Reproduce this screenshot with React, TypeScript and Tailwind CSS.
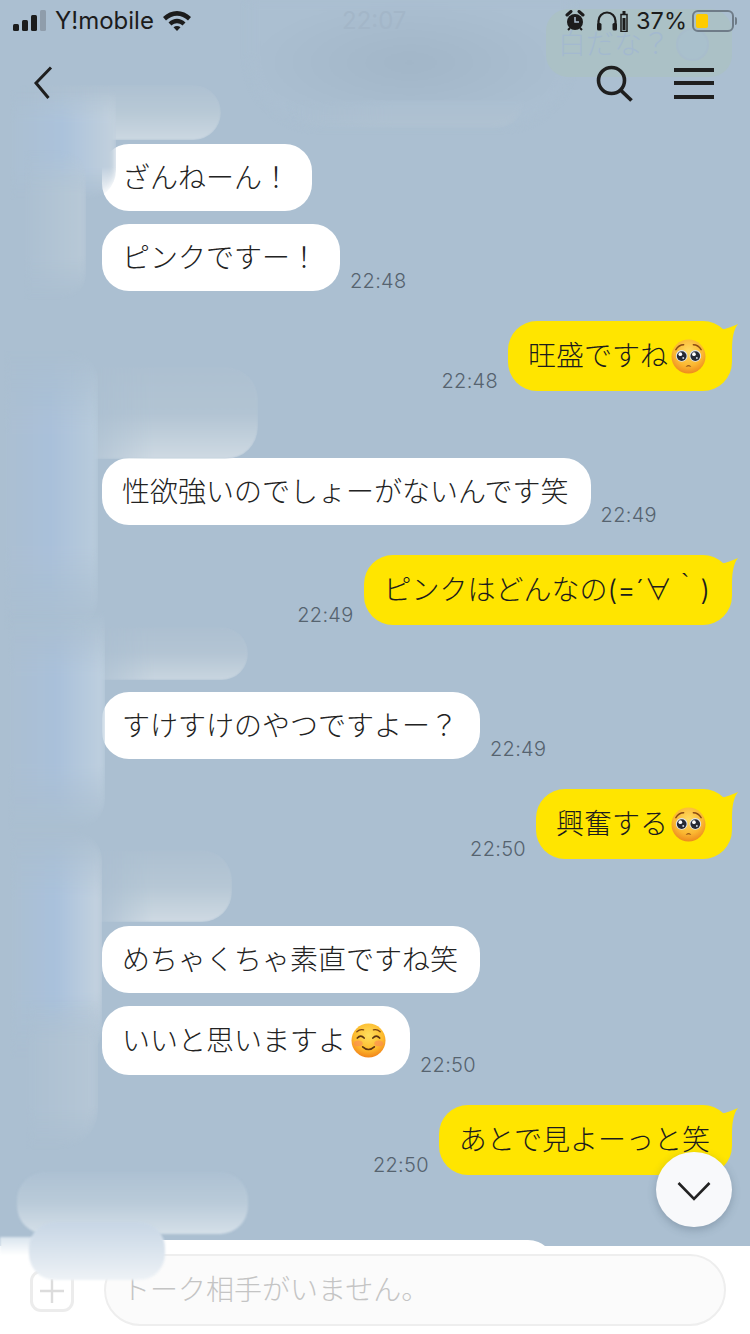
import React from "react";

const FONT = "font-['Inter','Noto_Sans_CJK_JP',sans-serif]";

function Pleading() {
  return (
    <svg viewBox="0 0 36 36" className="w-[35px] h-[35px] shrink-0 ml-[3px]">
      <defs>
        <radialGradient id="pf" cx="50%" cy="35%" r="65%">
          <stop offset="0%" stopColor="#ffdc63" />
          <stop offset="65%" stopColor="#fbb731" />
          <stop offset="100%" stopColor="#ee8a1e" />
        </radialGradient>
      </defs>
      <circle cx="18" cy="18" r="17.5" fill="url(#pf)" />
      <path d="M5 11 Q8 6 13 6" stroke="#8a4b12" strokeWidth="1.5" fill="none" strokeLinecap="round" />
      <path d="M31 11 Q28 6 23 6" stroke="#8a4b12" strokeWidth="1.5" fill="none" strokeLinecap="round" />
      <circle cx="11" cy="17.4" r="6" fill="#dfe4ee" />
      <circle cx="25" cy="17.4" r="6" fill="#dfe4ee" />
      <circle cx="11" cy="17.6" r="5" fill="#262a34" />
      <circle cx="25" cy="17.6" r="5" fill="#262a34" />
      <circle cx="9.6" cy="15.6" r="1.9" fill="#fff" />
      <circle cx="23.6" cy="15.6" r="1.9" fill="#fff" />
      <circle cx="12.6" cy="19.6" r="1" fill="#cfd6e6" />
      <circle cx="26.6" cy="19.6" r="1" fill="#cfd6e6" />
      <path d="M15 28.5 Q18 25.5 21 28.5 Q18 27.6 15 28.5Z" fill="#7a3c10" />
    </svg>
  );
}

function Smiling() {
  return (
    <svg viewBox="0 0 36 36" className="w-[35px] h-[35px] shrink-0 ml-[5px] mr-[2px]">
      <defs>
        <radialGradient id="sf" cx="50%" cy="35%" r="65%">
          <stop offset="0%" stopColor="#ffdf5e" />
          <stop offset="65%" stopColor="#fdbb2d" />
          <stop offset="100%" stopColor="#f2851b" />
        </radialGradient>
      </defs>
      <circle cx="18" cy="18" r="17.5" fill="url(#sf)" />
      <ellipse cx="7.5" cy="21" rx="4.5" ry="3" fill="#f9835a" opacity="0.55" />
      <ellipse cx="28.5" cy="21" rx="4.5" ry="3" fill="#f9835a" opacity="0.55" />
      <path d="M6 9 Q9 6 13 7" stroke="#7a4212" strokeWidth="1.3" fill="none" strokeLinecap="round" />
      <path d="M30 9 Q27 6 23 7" stroke="#7a4212" strokeWidth="1.3" fill="none" strokeLinecap="round" />
      <path d="M6.5 15.5 Q10 11.5 13.5 15.5" stroke="#5b3210" strokeWidth="1.7" fill="none" strokeLinecap="round" />
      <path d="M22.5 15.5 Q26 11.5 29.5 15.5" stroke="#5b3210" strokeWidth="1.7" fill="none" strokeLinecap="round" />
      <path d="M12 24.5 Q18 30 24 24.5" stroke="#5b3210" strokeWidth="1.7" fill="none" strokeLinecap="round" />
    </svg>
  );
}

function Tail() {
  return (
    <svg viewBox="0 0 24 26" className="absolute -right-[6px] top-[2px] w-[24px] h-[26px]">
      <path d="M0 6 C8 8 14 5 24 1 C20 6 18 14 18 26 L0 26Z" fill="#ffe500" />
    </svg>
  );
}

function Time({ t }: { t: string }) {
  return <span className="text-[20px] leading-[20px] tracking-[0.3px] font-light text-[#56636f] shrink-0">{t}</span>;
}

function Them({ text, time, mt, h = "h-[67px]", emoji }: { text: string; time?: string; mt: string; h?: string; emoji?: boolean }) {
  return (
    <div className={`flex items-end gap-[10px] pl-[102px] shrink-0 ${mt}`}>
      <div className={`flex items-center bg-white rounded-[27px] pl-[20px] pr-[22px] text-[28px] font-light text-[#222] whitespace-nowrap ${h}`}>
        {text}
        {emoji && <Smiling />}
      </div>
      {time && <Time t={time} />}
    </div>
  );
}

function Me({ children, time, mt, emoji }: { children: React.ReactNode; time: string; mt: string; emoji?: boolean }) {
  return (
    <div className={`flex items-end justify-end gap-[10px] pr-[18px] shrink-0 ${mt}`}>
      <Time t={time} />
      <div className={`relative flex items-center bg-[#ffe500] rounded-[29px] pl-[20px] h-[70px] text-[28px] font-light text-[#1c1c1c] whitespace-nowrap ${emoji ? "pr-[26px]" : "pr-[22px]"}`}>
        <Tail />
        <span className="relative">{children}</span>
        {emoji && <span className="relative"><Pleading /></span>}
      </div>
    </div>
  );
}

const FADE_Y = "[mask-image:linear-gradient(to_bottom,transparent,black_30%,black_70%,transparent)]";
const FADE_X = "[mask-image:linear-gradient(to_right,transparent,black_45%)]";

const smears = [
  `left-[250px] top-0 w-[320px] h-[125px] rounded-b-[70px] bg-[radial-gradient(ellipse_at_center,#a2b6c8,#abbfd1_72%)] blur-[4px]`,
  `left-[285px] top-[100px] w-[240px] h-[28px] rounded-b-[40px] bg-linear-to-b from-[#abbfd1] to-[#b0c2d1] blur-[3px] ${FADE_X}`,
  `left-[20px] top-[85px] w-[201px] h-[55px] rounded-r-[28px] bg-linear-to-b from-[#aec1d2] via-[#b8c9d6] to-[#ccd8e2] blur-[1px] ${FADE_X}`,
  `left-[10px] top-[90px] w-[106px] h-[110px] rounded-br-[30px] bg-linear-to-r from-[#abbfd1] via-[#abc2db] to-[#c3d1dd] blur-[3px] ${FADE_Y}`,
  `left-[24px] top-[150px] w-[62px] h-[150px] rounded-r-[26px] bg-linear-to-r from-[#abbfd1] to-[#b8c9d7] blur-[3px] ${FADE_Y}`,
  `left-[70px] top-[367px] w-[188px] h-[92px] rounded-r-[32px] bg-linear-to-b from-[#adc0d1] via-[#b2c4d3] to-[#cfdae3] blur-[1px] ${FADE_X}`,
  `left-[4px] top-[350px] w-[94px] h-[280px] rounded-r-[30px] bg-linear-to-r from-[#abbfd1] via-[#a9c0da] to-[#b9ccdc] blur-[3px] ${FADE_Y}`,
  `left-[80px] top-[627px] w-[168px] h-[53px] rounded-r-[26px] bg-linear-to-b from-[#adc0d1] via-[#b4c5d4] to-[#c9d6e0] blur-[1px] ${FADE_X}`,
  `left-[8px] top-[610px] w-[97px] h-[220px] rounded-br-[30px] bg-linear-to-r from-[#abbfd1] via-[#a9c0da] to-[#bfd0df] blur-[3px] ${FADE_Y}`,
  `left-[90px] top-[850px] w-[142px] h-[72px] rounded-r-[30px] bg-linear-to-b from-[#adc0d1] via-[#b6c7d5] to-[#cfdae3] blur-[1px] ${FADE_X}`,
  `left-[10px] top-[830px] w-[92px] h-[230px] rounded-r-[30px] bg-linear-to-r from-[#abbfd1] via-[#a9c1dc] to-[#c5d3df] blur-[3px] ${FADE_Y}`,
  `left-[26px] top-[1000px] w-[72px] h-[150px] rounded-br-[40px] bg-linear-to-r from-[#abbfd1] to-[#b6c7d6] blur-[4px] ${FADE_Y}`,
  "left-[17px] top-[1172px] w-[231px] h-[62px] rounded-[28px] bg-linear-to-b from-[#adc1d3] via-[#bacbd9] to-[#d5e0e9] blur-[1px]",
  "left-0 top-[1237px] w-[60px] h-[18px] bg-linear-to-b from-[#d9e4ee] to-[#fff] blur-[1px]",
  "left-[29px] top-[1222px] w-[136px] h-[58px] rounded-[26px] bg-linear-to-b from-[#c7d6e5] to-[#eef2f6] blur-[1px]",
];

export default function App() {
  return (
    <div className={`relative flex flex-col w-[750px] h-[1334px] overflow-hidden bg-[#abbfd1] ${FONT}`}>
      <header className="relative z-20 shrink-0 h-[144px]">
        {/* faded pinned bubble behind the status bar */}
        <div className="absolute left-[546px] top-[9px] w-[186px] h-[68px] rounded-[22px] bg-[#abc1c6] flex items-center pl-[12px] pt-[2px] text-[28px] leading-[24px] font-light text-[#a3b9cf]">
          <span>白だな？</span>
          <span className="ml-[6px] w-[33px] h-[33px] rounded-full bg-[#a9c0cc] border-[2px] border-[#a8bdcc]" />
        </div>
        <div className="absolute left-[342px] top-[7px] text-[24px] leading-[28px] text-[#a3b6c8]">22:07</div>

        <div className="relative flex items-center h-[42px] pl-[13px] pr-[13px] text-[#1c1c1c]">
          <svg viewBox="0 0 34 22" className="w-[34px] h-[22px]">
            <rect x="0" y="14" width="6" height="7" rx="1.5" fill="#1c1c1c" />
            <rect x="9" y="10" width="6" height="11" rx="1.5" fill="#1c1c1c" />
            <rect x="18" y="5" width="6" height="16" rx="1.5" fill="#1c1c1c" />
            <rect x="27" y="0" width="6" height="21" rx="1.5" fill="#8f9dab" />
          </svg>
          <span className="ml-[8px] text-[24px] leading-none">Y!mobile</span>
          <svg viewBox="0 0 30 22" className="ml-[8px] w-[30px] h-[22px]">
            <path d="M1 7 C9 -1 21 -1 29 7 L26 10.5 C19.5 4 10.5 4 4 10.5Z" fill="#1c1c1c" />
            <path d="M6.5 12.5 C12 7.5 18 7.5 23.5 12.5 L20.5 15.5 C17 12.5 13 12.5 9.5 15.5Z" fill="#1c1c1c" />
            <path d="M11.5 17.2 C13.5 15.6 16.5 15.6 18.5 17.2 L15 21Z" fill="#1c1c1c" />
          </svg>
          <div className="flex-1" />
          <svg viewBox="0 0 20 22" className="w-[20px] h-[22px]">
            <circle cx="10" cy="12" r="8" fill="#1c1c1c" />
            <path d="M2 5 L6 1.5 M18 5 L14 1.5" stroke="#1c1c1c" strokeWidth="3" strokeLinecap="round" />
            <path d="M3 20 L5 18 M17 20 L15 18" stroke="#1c1c1c" strokeWidth="2" />
            <path d="M10 7 V12 H14" stroke="#abbfd1" strokeWidth="1.5" fill="none" />
          </svg>
          <svg viewBox="0 0 22 20" className="ml-[11px] w-[22px] h-[20px]">
            <path d="M2.5 14 V10 a8.5 8.5 0 0 1 17 0 V14" stroke="#1c1c1c" strokeWidth="2.2" fill="none" />
            <rect x="1" y="12" width="4.5" height="7.5" rx="1.5" fill="#1c1c1c" />
            <rect x="16.5" y="12" width="4.5" height="7.5" rx="1.5" fill="#1c1c1c" />
          </svg>
          <svg viewBox="0 0 8 21" className="ml-[2px] w-[8px] h-[21px]">
            <rect x="2.5" y="0" width="3" height="3" fill="#1c1c1c" />
            <rect x="1" y="3.5" width="6" height="17" fill="none" stroke="#1c1c1c" strokeWidth="1.5" />
            <rect x="2.5" y="7" width="3" height="12" fill="#1c1c1c" />
          </svg>
          <span className="ml-[8px] text-[23.5px] leading-none">37%</span>
          <div className="relative ml-[5px] w-[42px] h-[22px] rounded-[6px] border-[2px] border-[#6f7c88] p-[2px] mr-[3px]">
            <div className="w-[12px] h-full rounded-[2px] bg-[#ffcc00]" />
            <div className="absolute -right-[5px] top-[5px] w-[2px] h-[8px] rounded-r-[2px] bg-[#6f7c88]" />
          </div>
        </div>

        <nav className="relative flex items-center h-[82px]">
          <svg viewBox="0 0 20 34" className="ml-[33px] w-[20px] h-[34px]">
            <path d="M18 1.5 L3 17 L15.5 32" stroke="#1f1f1f" strokeWidth="3" fill="none" />
          </svg>
          <div className="flex-1" />
          <svg viewBox="0 0 38 37" className="w-[38px] h-[37px]">
            <circle cx="15.5" cy="15.5" r="13" stroke="#1f1f1f" strokeWidth="3.6" fill="none" />
            <path d="M24.5 25 L35.5 35.5" stroke="#1f1f1f" strokeWidth="3.8" />
          </svg>
          <div className="ml-[40px] mr-[36px] flex flex-col gap-[9.5px] w-[40px]">
            <div className="h-[4px] bg-[#1f1f1f]" />
            <div className="h-[4px] bg-[#1f1f1f]" />
            <div className="h-[4px] bg-[#1f1f1f]" />
          </div>
        </nav>
      </header>

      <main className="relative flex-1 flex flex-col overflow-hidden">
        <Them mt="mt-0" text="ざんねーん！" />
        <Them mt="mt-[13px]" text="ピンクですー！" time="22:48" />
        <Me mt="mt-[30px]" time="22:48" emoji>旺盛ですね</Me>
        <Them mt="mt-[67px]" text="性欲強いのでしょーがないんです笑" time="22:49" />
        <Me mt="mt-[30px]" time="22:49">ピンクはどんなの(=´∀｀)</Me>
        <Them mt="mt-[67px]" text="すけすけのやつですよー？" time="22:49" />
        <Me mt="mt-[30px]" time="22:50" emoji>興奮する</Me>
        <Them mt="mt-[67px]" text="めちゃくちゃ素直ですね笑" />
        <Them mt="mt-[13px]" h="h-[69px]" text="いいと思いますよ" time="22:50" emoji />
        <Me mt="mt-[30px]" time="22:50">あとで見よーっと笑</Me>
        <Them mt="mt-[65px]" h="h-[67px] w-[453px]" text="" />
      </main>

      <footer className="relative shrink-0 h-[88px] bg-white flex items-start pl-[30px] pr-[24px]">
        <div className="mt-[24px] w-[44px] h-[42px] rounded-[11px] border-[3px] border-[#ececec] flex items-center justify-center">
          <svg viewBox="0 0 28 28" className="w-[28px] h-[28px]">
            <path d="M14 2 V26 M2 14 H26" stroke="#dcdcdc" strokeWidth="2.4" />
          </svg>
        </div>
        <div className="ml-[30px] mt-[8px] flex-1 h-[72px] rounded-[36px] border-[2px] border-[#eeeeee] bg-[#fbfbfb] flex items-center pl-[16px] text-[28px] font-light text-[#c4c4c4]">
          トーク相手がいません。
        </div>
      </footer>

      {/* scrubbed-out avatars and names, painted over the picture */}
      {smears.map((c) => (
        <div key={c} className={`absolute z-10 pointer-events-none ${c}`} />
      ))}

      <button className="absolute z-30 left-[656px] top-[1152px] w-[76px] h-[75px] rounded-full bg-[#f8f9fb] shadow-[0_3px_8px_rgba(60,80,100,0.3)] flex items-center justify-center">
        <svg viewBox="0 0 34 20" className="w-[34px] h-[20px] mt-[3px]">
          <path d="M1.5 2 L17 18 L32.5 2" stroke="#222" strokeWidth="2.6" fill="none" />
        </svg>
      </button>
    </div>
  );
}
